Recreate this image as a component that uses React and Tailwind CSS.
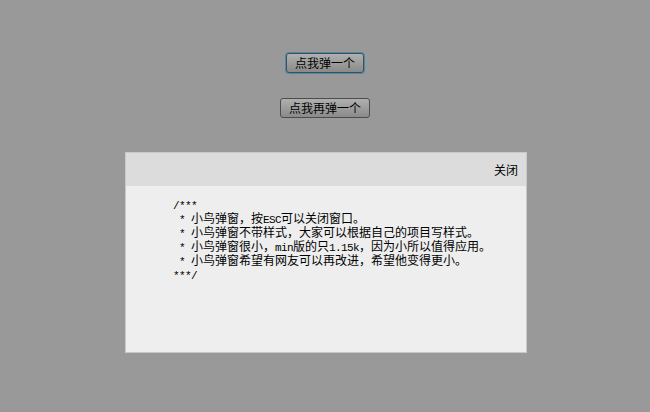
import React from "react";

const cjk = "font-['Noto_Sans_CJK_SC',sans-serif]";
const mono =
  "font-['Liberation_Mono','Noto_Sans_CJK_SC',monospace] text-[11px] tracking-[-0.6px] leading-[14px]";

const A = ({ children }) => <span className={mono}>{children}</span>;

export default function App() {
  const btn =
    "h-[20px] px-2 text-[12px] leading-none text-black rounded-[3px] border border-[#4c4c4c] bg-gradient-to-b from-[#b0b0b0] to-[#8a8a8a] " +
    cjk;
  const line = "h-[14px] leading-[14px]";

  return (
    <div className={`w-[650px] h-[412px] bg-[#999999] flex flex-col items-center pt-[53px] ${cjk}`}>
      <button className={`${btn} border-[#2d7396] ring-1 ring-[#3d8db5]`}>点我弹一个</button>
      <button className={`${btn} mt-[25px]`}>点我再弹一个</button>

      <div className="mt-[34px] ml-[2px] w-[402px] h-[201px] flex flex-col border border-[#c9c9c9] bg-[#eeeeee]">
        <div className="h-[33px] bg-[#dcdcdc] flex items-center justify-end pr-[8px]">
          <span className="text-[12px] text-black">关闭</span>
        </div>
        <div className="pl-[47px] pt-[11px] text-[12px] text-black whitespace-pre">
          <div className={line}><A>/***</A></div>
          <div className={line}><A>{" * "}</A>小鸟弹窗，按<A>ESC</A>可以关闭窗口。</div>
          <div className={line}><A>{" * "}</A>小鸟弹窗不带样式，大家可以根据自己的项目写样式。</div>
          <div className={line}><A>{" * "}</A>小鸟弹窗很小，<A>min</A>版的只<A>1.15k</A>，因为小所以值得应用。</div>
          <div className={line}><A>{" * "}</A>小鸟弹窗希望有网友可以再改进，希望他变得更小。</div>
          <div className={line}><A>***/</A></div>
        </div>
      </div>
    </div>
  );
}
